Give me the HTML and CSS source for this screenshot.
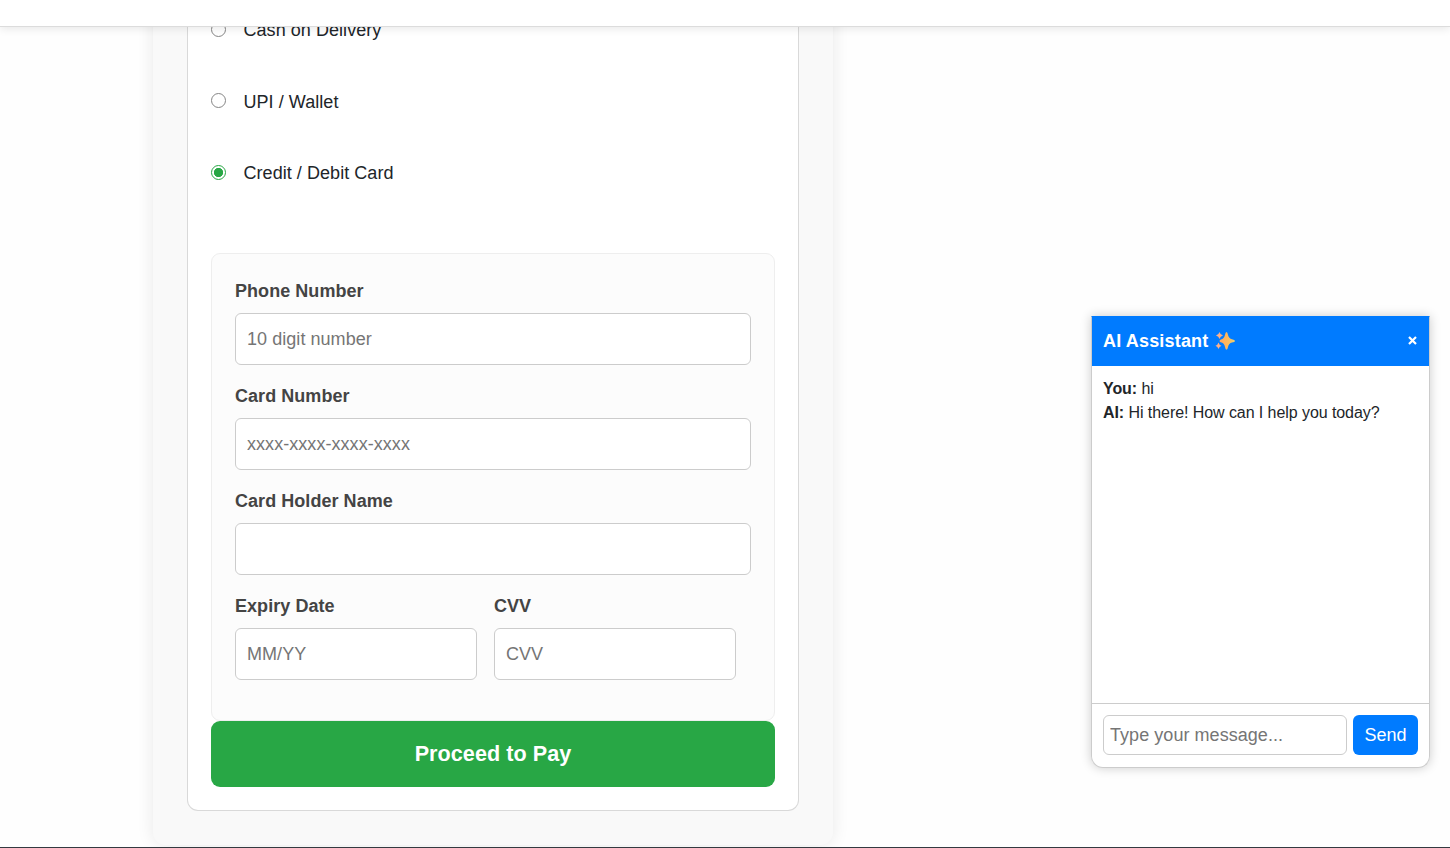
FILE: index.html
```html
<!DOCTYPE html>
<html lang="en">
<head>
<meta charset="utf-8">
<title>Checkout</title>
<link rel="stylesheet" href="styles.css">
</head>
<body>
<header class="topbar"></header>
<main class="checkout">
  <form class="payment">
    <div class="methods">
      <label class="method"><input class="radio" type="radio" name="m"><span class="method-name">Cash on Delivery</span></label>
      <label class="method"><input class="radio" type="radio" name="m"><span class="method-name">UPI / Wallet</span></label>
      <label class="method"><input class="radio" type="radio" name="m" checked><span class="method-name">Credit / Debit Card</span></label>
    </div>
    <section class="details">
      <div class="field"><label class="label">Phone Number</label><input class="input" placeholder="10 digit number"></div>
      <div class="field"><label class="label">Card Number</label><input class="input" placeholder="xxxx-xxxx-xxxx-xxxx"></div>
      <div class="field"><label class="label">Card Holder Name</label><input class="input"></div>
      <div class="pair">
        <div class="field"><label class="label">Expiry Date</label><input class="input" placeholder="MM/YY"></div>
        <div class="field"><label class="label">CVV</label><input class="input" placeholder="CVV"></div>
      </div>
    </section>
    <button class="pay" type="button">Proceed to Pay</button>
  </form>
</main>
<aside class="chat">
  <div class="chat-head">
    <span class="chat-title">AI Assistant</span>
    <svg class="sparkles" viewBox="0 0 20 20" width="20" height="20">
      <defs><linearGradient id="gold" x1="0" x2="1"><stop offset="0" stop-color="#ffa763"/><stop offset=".5" stop-color="#ffb95c"/><stop offset="1" stop-color="#e8cf72"/></linearGradient></defs>
      <path fill="url(#gold)" d="M11.500 1Q12.500 1 13 4Q13.800 7.600 17 8.300Q20 9 20 10Q20 11 17 11.600Q13.800 12.300 13 16Q12.500 18.800 11.500 18.800Q10.500 18.800 10 16Q9.200 12.300 6.500 11.600Q4.500 11 4.500 10Q4.500 9 6.500 8.300Q9.200 7.600 10 4Q10.500 1 11.500 1Z"/>
      <path fill="#ffb08a" d="M4.500 1Q5.200 3.800 8 4.500Q5.200 5.200 4.500 8Q3.800 5.200 1 4.500Q3.800 3.800 4.500 1ZM3.500 11.500Q4.200 14 6.500 14.700Q4.200 15.400 3.500 18Q2.800 15.400 .5 14.700Q2.800 14 3.500 11.500Z"/>
    </svg>
    <svg class="close" viewBox="0 0 9 9" width="9" height="9"><path d="M1 1L8 8M8 1L1 8" stroke="#fff" stroke-width="2.200"/></svg>
  </div>
  <div class="chat-log">
    <div><b>You:</b> hi</div>
    <div><b>AI:</b> Hi there! How can I help you today?</div>
  </div>
  <div class="chat-form">
    <input class="chat-input" placeholder="Type your message...">
    <button class="send" type="button">Send</button>
  </div>
</aside>
<footer class="footer"></footer>
</body>
</html>
```
FILE: styles.css
```css
* { box-sizing: border-box; }
body {
  margin: 0;
  height: 848px;
  overflow: hidden;
  position: relative;
  background: #fefefe;
  color: #212529;
  font: 18px/27px "Liberation Sans", Arial, sans-serif;
  letter-spacing: .05px;
}
input, button { font: inherit; letter-spacing: inherit; margin: 0; }
.topbar {
  position: absolute;
  z-index: 2;
  top: 0;
  left: 0;
  right: 0;
  height: 27px;
  background: #fff;
  border-bottom: 1px solid #dcdcdc;
  box-shadow: 0 2px 9px rgba(0, 0, 0, .09);
}
.checkout {
  width: 680px;
  height: 845px;
  margin-left: 153px;
  padding: 0 34px 34px;
  background: #f9f9f9;
  border-radius: 0 0 13px 13px;
  box-shadow: 0 0 17px rgba(0, 0, 0, .09);
}
.payment {
  height: 811px;
  padding: 0 23px 23px;
  background: #fff;
  border: 1px solid #d9d9d9;
  border-top: 0;
  border-radius: 0 0 11px 11px;
}
.methods {
  height: 253px;
  padding-top: 15.800px;
  display: flex;
  flex-direction: column;
  gap: 44.500px;
}
.method { display: flex; align-items: center; gap: 17.500px; height: 27px; }
.method-name { padding-top: 2.600px; }
.radio {
  appearance: none;
  width: 15px;
  height: 15px;
  background: #fff;
  border: 1px solid #858585;
  border-radius: 50%;
}
.radio:checked {
  border-color: #28a745;
  background: radial-gradient(circle, #28a745 4.300px, #fff 5px);
}
.details {
  height: 468px;
  padding: 23px;
  background: #fcfcfc;
  border: 1px solid #eee;
  border-radius: 9px;
}
.field { height: 105px; }
.label { display: block; height: 36px; padding-top: 1px; font-weight: bold; color: #444; }
.input {
  display: block;
  width: 100%;
  height: 52px;
  padding: 0 11px;
  background: #fff;
  border: 1px solid #ccc;
  border-radius: 6px;
}
::placeholder { color: #757575; opacity: 1; }
.pair { display: grid; grid-template-columns: 242px 242px; gap: 17px; }
.pay {
  display: block;
  width: 100%;
  height: 66px;
  padding: 0 0 2px;
  border: 0;
  border-radius: 9px;
  background: #28a745;
  color: #fff;
  font-size: 21.600px;
  font-weight: bold;
}
.chat {
  position: absolute;
  left: 1091px;
  top: 316px;
  width: 339px;
  height: 452px;
  display: flex;
  flex-direction: column;
  background: #fff;
  border: 1px solid #ccc;
  border-top-color: #007bff;
  border-radius: 0 0 12px 12px;
  box-shadow: 0 0 11px rgba(0, 0, 0, .2);
}
.chat-head {
  height: 49px;
  padding: 0 12px 1px 11px;
  display: flex;
  align-items: center;
  background: #007bff;
  color: #fff;
  font-weight: bold;
}
.chat-title { letter-spacing: .17px; }
.sparkles { margin-left: 7px; }
.close { margin: 0 0 1px auto; }
.chat-log {
  flex: 1;
  padding: 11px;
  font-size: 16px;
  line-height: 24px;
  letter-spacing: -.07px;
}
.chat-form {
  height: 64px;
  padding: 11px;
  display: flex;
  gap: 6px;
  border-top: 1px solid #ccc;
}
.chat-input {
  width: 244px;
  height: 40px;
  padding: 0 6px;
  border: 1px solid #ccc;
  border-radius: 6px;
}
.send {
  width: 65px;
  height: 40px;
  padding: 0;
  border: 0;
  border-radius: 6px;
  background: #007bff;
  color: #fff;
}
.footer {
  position: absolute;
  left: 0;
  right: 0;
  bottom: 0;
  height: 1px;
  background: #343a40;
}
```
